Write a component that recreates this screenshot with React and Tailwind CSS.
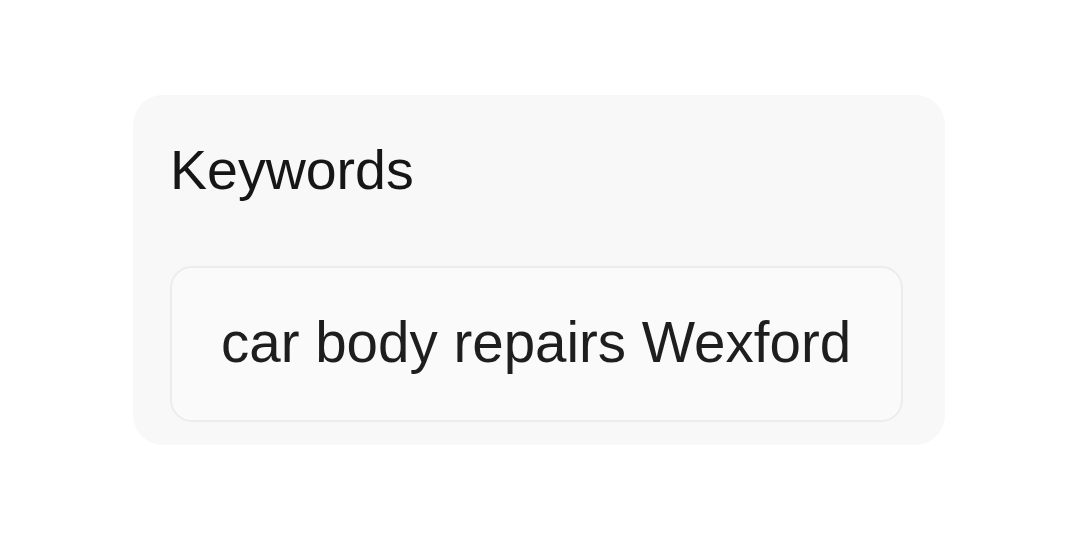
export default function App() {
  return (
    <div className="w-[1080px] h-[540px] bg-white pt-[95px] pl-[133px]" style={{ fontFamily: '"Liberation Sans", Arial, sans-serif' }}>
      <div className="w-[812px] h-[350px] rounded-[30px] bg-[#f8f8f8] pt-[48px] pl-[37px] flex flex-col">
        <div className="text-[55.5px] leading-none text-[#161616]">Keywords</div>
        <div className="mt-[67px] w-[733px] h-[156px] rounded-[22px] border-2 border-[#ececec] bg-[#fafafa] flex items-center pl-[49px]">
          <span className="text-[56.5px] leading-none text-[#1e1e1e]">car body repairs Wexford</span>
        </div>
      </div>
    </div>
  );
}
